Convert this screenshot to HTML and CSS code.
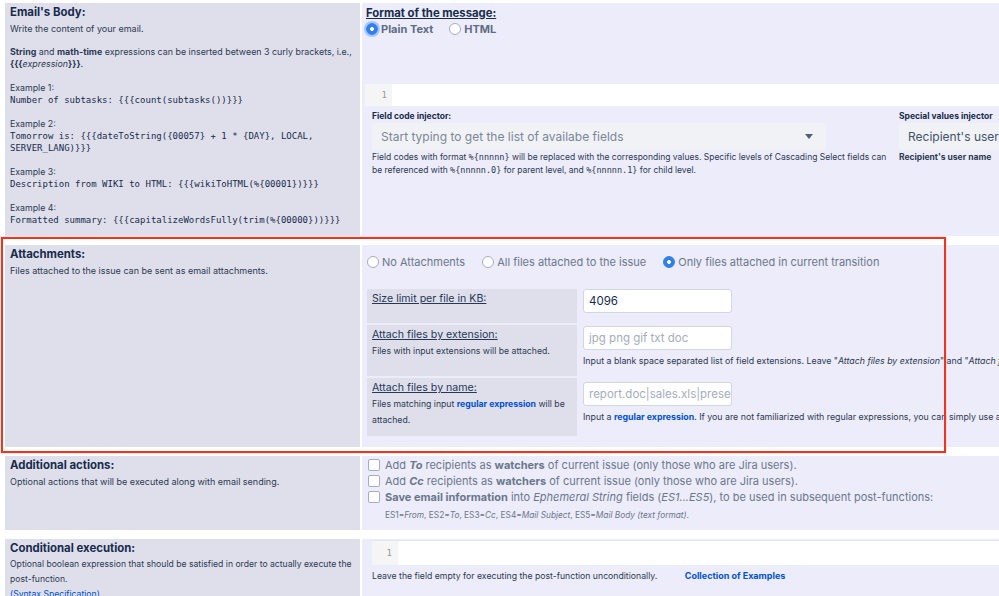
FILE: index.html
```html
<!DOCTYPE html>
<html lang="en">
	<head>
		<meta charset="UTF-8" />
		<title>Email post-function</title>
		<link rel="stylesheet" href="styles.css">
	</head>
	<body>
		<div class="form">
			<!-- email body -->
			<div class="row">
				<div class="label-cell first">
					<h3>Email's Body:</h3>
					<p class="desc">Write the content of your email.</p>
					<p class="desc block"><span class="nowrap"><b>String</b> and <b>math-time</b> expressions can be inserted between 3 curly brackets, i.e.,</span><br><b>{{{</b><i>expression</i><b>}}}</b>.</p>
					<div class="example">
						<div>Example 1:</div>
						<code>Number of subtasks: {{{count(subtasks())}}}</code>
					</div>
					<div class="example">
						<div>Example 2:</div>
						<code>Tomorrow is: {{{dateToString({00057} + 1 * {DAY}, LOCAL,<br>SERVER_LANG)}}}</code>
					</div>
					<div class="example">
						<div>Example 3:</div>
						<code>Description from WIKI to HTML: {{{wikiToHTML(%{00001})}}}</code>
					</div>
					<div class="example">
						<div>Example 4:</div>
						<code>Formatted summary: {{{capitalizeWordsFully(trim(%{00000}))}}}</code>
					</div>
				</div>
				<div class="field-cell body-field">
					<h4>Format of the message:</h4>
					<div class="choices tight">
						<span class="choice strong"><span class="radio checked focus"></span>Plain Text</span>
						<span class="choice strong"><span class="radio"></span>HTML</span>
					</div>
					<div class="editor"><span class="gutter">1</span></div>
					<div class="injectors">
						<div class="injector main">
							<h5>Field code injector:</h5>
							<div class="select">
								<span>Start typing to get the list of availabe fields</span>
								<svg class="caret" width="8" height="5" viewBox="0 0 8 5"><path d="M0 0h8L4 5z" fill="#505f79"/></svg>
							</div>
							<p class="help">Field codes with format <code>%{nnnnn}</code> will be replaced with the corresponding values. Specific levels of Cascading Select fields can be referenced with <code>%{nnnnn.0}</code> for parent level, and <code>%{nnnnn.1}</code> for child level.</p>
						</div>
						<div class="injector side">
							<h5>Special values injector</h5>
							<div class="select dark"><span>Recipient's user name</span></div>
							<p class="help"><b>Recipient's user name</b></p>
						</div>
					</div>
				</div>
			</div>

			<!-- attachments -->
			<div class="row">
				<div class="label-cell">
					<h3>Attachments:</h3>
					<p class="desc">Files attached to the issue can be sent as email attachments.</p>
				</div>
				<div class="field-cell attach-field">
					<div class="choices">
						<span class="choice"><span class="radio"></span>No Attachments</span>
						<span class="choice"><span class="radio"></span>All files attached to the issue</span>
						<span class="choice"><span class="radio checked"></span>Only files attached in current transition</span>
					</div>
					<div class="subgrid">
						<div class="sub-label">
							<h6>Size limit per file in KB:</h6>
						</div>
						<div class="sub-field">
							<div class="input">4096</div>
						</div>
						<div class="sub-label">
							<h6>Attach files by extension:</h6>
							<p class="small">Files with input extensions will be attached.</p>
						</div>
						<div class="sub-field second">
							<div class="input empty">jpg png gif txt doc</div>
							<p class="help line">Input a blank space separated list of field extensions. Leave "<i>Attach files by extension</i>" and "<i>Attach files by name</i>" empty for attaching all files.</p>
						</div>
						<div class="sub-label">
							<h6>Attach files by name:</h6>
							<p class="small">Files matching input <a href="#">regular expression</a> will be attached.</p>
						</div>
						<div class="sub-field third">
							<div class="input empty">report.doc|sales.xls|presentation.ppt</div>
							<p class="help line">Input a <a href="#">regular expression</a>. If you are not familiarized with regular expressions, you can simply use a list of file names.</p>
						</div>
					</div>
				</div>
			</div>

			<!-- additional actions -->
			<div class="row">
				<div class="label-cell">
					<h3>Additional actions:</h3>
					<p class="desc">Optional actions that will be executed along with email sending.</p>
				</div>
				<div class="field-cell actions-field">
					<div class="check"><span class="box"></span><span>Add <b><i>To</i></b> recipients as <b>watchers</b> of current issue (only those who are Jira users).</span></div>
					<div class="check"><span class="box"></span><span>Add <b><i>Cc</i></b> recipients as <b>watchers</b> of current issue (only those who are Jira users).</span></div>
					<div class="check"><span class="box"></span><span><b>Save email information</b> into <i>Ephemeral String</i> fields (<i>ES1...ES5</i>), to be used in subsequent post-functions:</span></div>
					<p class="note">ES1=<i>From</i>, ES2=<i>To</i>, ES3=<i>Cc</i>, ES4=<i>Mail Subject</i>, ES5=<i>Mail Body (text format)</i>.</p>
				</div>
			</div>

			<!-- conditional execution -->
			<div class="row">
				<div class="label-cell">
					<h3>Conditional execution:</h3>
					<p class="desc loose">Optional boolean expression that should be satisfied in order to actually execute the post-function.<br><a href="#">(Syntax Specification)</a></p>
				</div>
				<div class="field-cell cond-field">
					<div class="editor"><span class="gutter">1</span></div>
					<p class="help">Leave the field empty for executing the post-function unconditionally. <a class="examples" href="#">Collection of Examples</a></p>
				</div>
			</div>
		</div>

		<div class="highlight"></div>
	</body>
</html>
```

FILE: styles.css
```css
body {
	margin: 0;
	background: #fff;
	font-family: 'Inter', 'Liberation Sans', sans-serif;
	color: #172b4d;
	overflow: hidden;
	width: 999px;
	height: 596px;
}

a {
	color: #0052cc;
	text-decoration: none;
	font-weight: bold;
}

code {
	font-family: 'DejaVu Sans Mono', monospace;
}

.nowrap {
	white-space: nowrap;
}

.form {
	padding: 3px 0 0 5px;
	display: flex;
	flex-direction: column;
	gap: 9px;
}

.row {
	display: grid;
	grid-template-columns: 355px 1fr;
	column-gap: 2px;
}

.label-cell {
	background: #dfdfeb;
	padding: 3px 5px 9px;
	overflow: hidden;
}

.label-cell.first {
	padding-bottom: 10px;
}

.field-cell {
	background: #ececfb;
	min-width: 0;
	overflow: hidden;
}

h3 {
	margin: 0;
	font-size: 11.4px;
	line-height: 13px;
	font-weight: 700;
}

.desc {
	margin: 4px 0 0;
	font-size: 9px;
	line-height: 12px;
	color: #2c3a52;
}

.desc.block {
	margin-top: 11px;
	font-size: 8.9px;
}

.desc.loose {
	margin-top: 2px;
	font-size: 8.65px;
	line-height: 15px;
}

.desc.loose a {
	font-weight: normal;
}

.example {
	margin-top: 11px;
	font-size: 8.8px;
	line-height: 13px;
	color: #2c3a52;
}

.example code {
	display: block;
	font-size: 9px;
	line-height: 12px;
	color: #172b4d;
}

/* email body */
.body-field {
	padding: 4px 0 0 3px;
}

h4 {
	margin: 0 0 0 1px;
	font-size: 11.3px;
	line-height: 12px;
	text-decoration: underline;
}

.choices {
	display: flex;
	gap: 17px;
	font-size: 11px;
	line-height: 14px;
	color: #6b778c;
}

.choices.tight {
	margin-top: 3px;
	gap: 16px;
	margin-left: 1px;
}

.choice {
	display: flex;
	align-items: center;
	gap: 3px;
	white-space: nowrap;
}

.choice.strong {
	font-weight: 700;
	color: #5e6c84;
}

.radio {
	width: 10px;
	height: 10px;
	border: 1px solid #a5adba;
	border-radius: 50%;
	background: #fff;
	flex: none;
}

.radio.checked {
	border-color: #2f80ed;
	background: radial-gradient(circle, #fff 0 1.6px, #2f80ed 2.2px);
}

.radio.focus {
	box-shadow: 0 0 0 2px rgba(76, 154, 255, 0.45);
}

.editor {
	margin-top: 48px;
	height: 22px;
	background: #fff;
	display: flex;
}

.gutter {
	width: 27px;
	box-sizing: border-box;
	background: #f5f5f5;
	text-align: right;
	padding-right: 5px;
	font-family: 'DejaVu Sans Mono', monospace;
	font-size: 9px;
	line-height: 22px;
	color: #999;
}

.injectors {
	display: flex;
	gap: 9px;
	margin: 4px 0 0 7px;
}

.injector.main {
	width: 518px;
	flex: none;
}

.injector.side {
	width: 200px;
	flex: none;
}

h5 {
	margin: 0;
	font-size: 8.5px;
	line-height: 12px;
	font-weight: 700;
}

.select {
	margin-top: 1px;
	height: 27px;
	width: 454px;
	background: #f1f2f5;
	border-radius: 3px;
	display: flex;
	align-items: center;
	justify-content: space-between;
	padding: 0 13px 0 9px;
	box-sizing: border-box;
	font-size: 12px;
	color: #7a869a;
	white-space: nowrap;
	overflow: hidden;
}

.select.dark {
	width: 200px;
	color: #42526e;
}

.help {
	margin: 1px 0 0;
	font-size: 8.5px;
	line-height: 13px;
	color: #2c3a52;
}

.help code {
	font-size: 8.5px;
}

.help.line {
	white-space: nowrap;
	margin-top: 5px;
	font-size: 8.8px;
	line-height: 12px;
}

/* attachments */
.attach-field {
	padding: 10px 0 11px 5px;
}

.subgrid {
	margin-top: 20px;
	display: grid;
	grid-template-columns: 210px 1fr;
	grid-template-rows: 34px 51px 58px;
	gap: 2px 6px;
}

.sub-label {
	background: #dfdfeb;
	padding: 3px 5px 0;
}

h6 {
	margin: 0;
	font-size: 10.6px;
	line-height: 13px;
	font-weight: normal;
	text-decoration: underline;
	color: #253858;
}

.small {
	margin: 2px 0 0;
	font-size: 8.7px;
	line-height: 16px;
	color: #2c3a52;
}

.sub-field {
	min-width: 0;
}

.sub-field.second {
	padding-top: 1px;
}

.sub-field.third {
	padding-top: 4px;
}

.input {
	width: 149px;
	height: 24px;
	box-sizing: border-box;
	background: #fff;
	border: 1px solid #d3d6dd;
	border-radius: 3px;
	padding: 0 5px;
	font-size: 11.5px;
	line-height: 22px;
	color: #172b4d;
	white-space: nowrap;
	overflow: hidden;
}

.input.empty {
	color: #a5adba;
}

/* additional actions */
.actions-field {
	padding: 1px 0 9px 6px;
}

.check {
	display: flex;
	align-items: center;
	gap: 5px;
	font-size: 11px;
	line-height: 16px;
	color: #6b778c;
	white-space: nowrap;
}

.box {
	width: 10px;
	height: 10px;
	border: 1px solid #a5adba;
	border-radius: 2px;
	background: #fff;
	flex: none;
}

.note {
	margin: 4px 0 0 17px;
	font-size: 8.3px;
	line-height: 12px;
	color: #6b778c;
}

/* conditional execution */
.cond-field {
	padding: 1px 0 0 10px;
}

.cond-field .editor {
	margin-top: 0;
	height: 25px;
	border-top: 1px solid #e3e3f6;
	box-sizing: border-box;
}

.cond-field .gutter {
	line-height: 24px;
	padding-right: 6px;
	width: 26px;
}

.cond-field .help {
	margin-top: 4px;
	font-size: 8.7px;
}

.examples {
	margin-left: 25px;
	font-size: 9px;
}

.highlight {
	position: absolute;
	left: 1px;
	top: 237px;
	width: 941px;
	height: 212px;
	border: 2px solid #ef3420;
	box-shadow: 0 0 1px rgba(239, 52, 32, 0.6);
	pointer-events: none;
}
```
